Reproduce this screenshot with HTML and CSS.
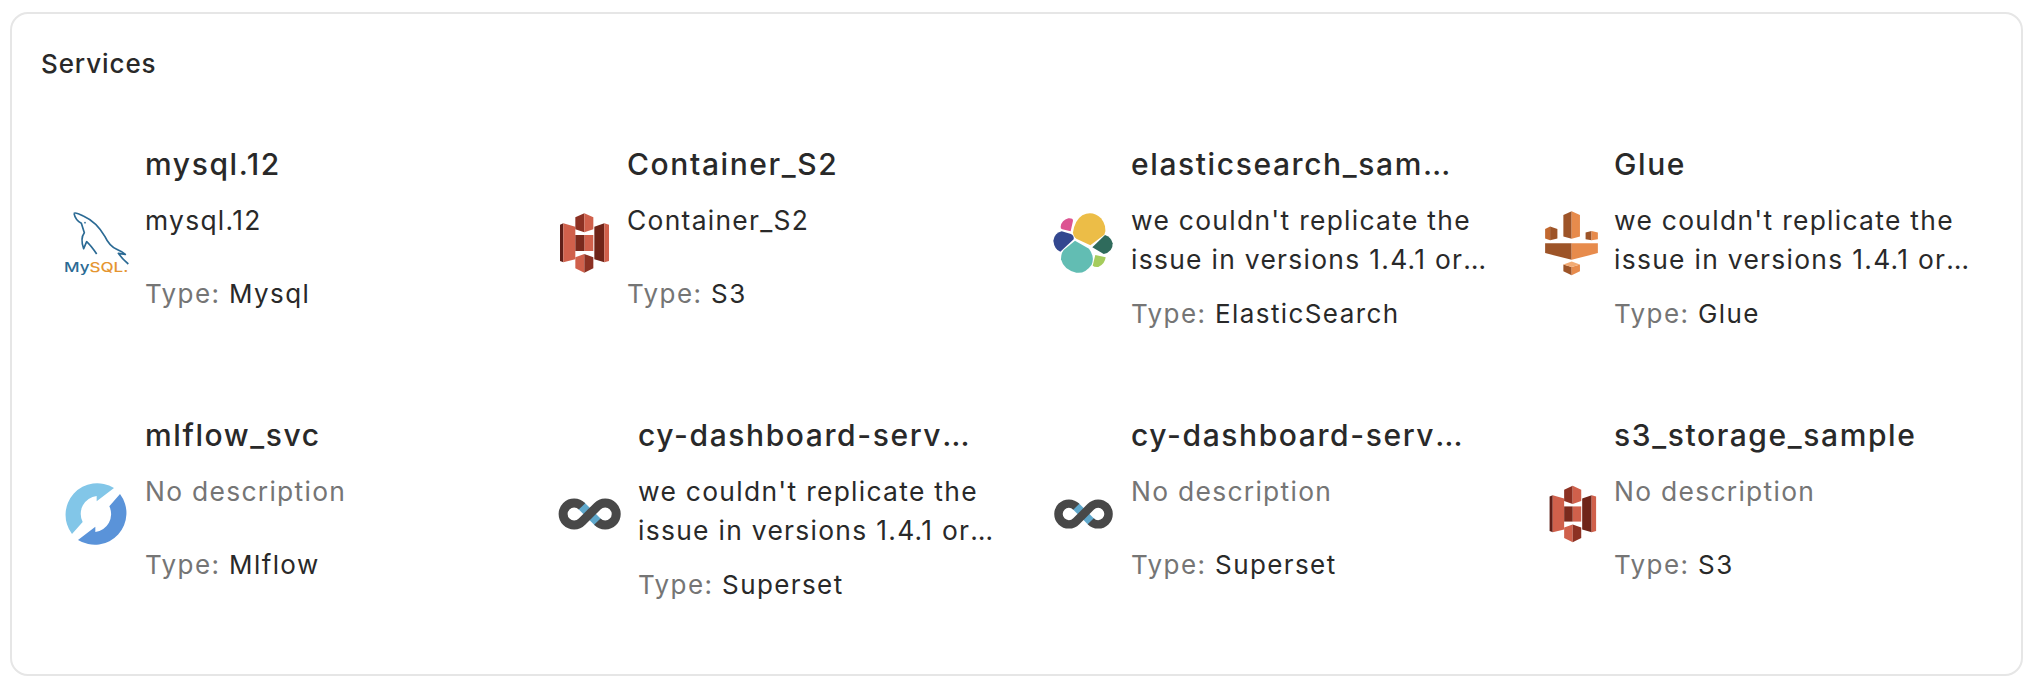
FILE: index.html
```html
<!DOCTYPE html>
<html lang="en">
<head>
    <meta charset="UTF-8">
    <meta name="viewport" content="width=device-width, initial-scale=1.0">
    <title>Services</title>
    <link rel="stylesheet" href="styles.css">
</head>
<body>
<svg class="defs" width="0" height="0">
    <defs>
        <symbol id="logo-s3" viewBox="36 30 177 198">
            <polygon fill="#5e1f18" points="60,74 70,70 70,187 60,183"/>
            <polygon fill="#d0604b" points="70,70 106,80 106,178 70,187"/>
            <polygon fill="#6f2418" points="163,80 193,70 193,187 163,178"/>
            <polygon fill="#d0604b" points="193,70 207,74 207,183 193,187"/>
            <polygon fill="#d0604b" points="133,105 160,105 160,153 133,153"/>
            <polygon fill="#7a2a1d" points="106,105 133,105 133,153 106,153"/>
            <polygon fill="#8c3123" points="106,52 133,40 133,97 106,88"/>
            <polygon fill="#d0604b" points="133,40 160,52 160,88 133,97"/>
            <polygon fill="#d0604b" points="106,172 133,162 133,218 106,205"/>
            <polygon fill="#8c3123" points="133,162 160,172 160,205 133,218"/>
        </symbol>
        <symbol id="logo-elastic" viewBox="36 30 204 198">
            <path fill="#ecbd47" d="M114 97Q120 60 142 46Q172 30 198 55Q218 80 208 104L166 136L124 116Q114 108 114 97Z"/>
            <path fill="#62bdb3" d="M120 122L162 146Q180 170 170 194Q150 222 124 218Q86 210 78 178Q78 160 86 150Z"/>
            <path fill="#33478f" d="M55 122Q58 100 80 94L108 102Q118 108 116 118L76 155Q58 148 55 122Z"/>
            <path fill="#dc5492" d="M77 80Q80 60 100 55Q114 54 114 62L107 94L82 88Q76 86 77 80Z"/>
            <path fill="#2f6b5c" d="M172 142L210 105Q228 110 233 130Q234 156 206 162Z"/>
            <path fill="#a5cc5c" d="M181 165L212 172Q210 192 190 201Q178 202 173 197Z"/>
        </symbol>
        <symbol id="logo-glue" viewBox="36 25 168 205">
            <polygon fill="#9d5428" points="100,43 125,32 125,115 100,108"/>
            <polygon fill="#e78b4c" points="125,32 150,43 150,108 125,115"/>
            <polygon fill="#c2682f" points="45,85 60,78 60,119 45,114"/>
            <polygon fill="#9d5428" points="60,78 82,85 82,114 60,119"/>
            <polygon fill="#9d5428" points="167,96 185,91 185,119 167,116"/>
            <polygon fill="#e78b4c" points="185,91 204,96 204,116 185,119"/>
            <polygon fill="#9d5428" points="45,128 125,128 125,178 45,158"/>
            <polygon fill="#e78b4c" points="125,128 204,128 204,158 125,178"/>
            <polygon fill="#9d5428" points="100,192 125,200 125,225 100,213"/>
            <polygon fill="#e78b4c" points="125,200 150,192 150,213 125,225"/>
            <polygon fill="#f2ab74" points="100,192 125,183 150,192 125,200"/>
        </symbol>
        <symbol id="logo-mlflow" viewBox="21 30 216 216">
            <path fill="#82c6e8" d="M66 198A95 95 0 0 1 192 60L140 100V84A54 54 0 0 0 98 162Z"/>
            <path fill="#5a93d9" d="M84 216A95 95 0 0 0 210 78L178 115A54 54 0 0 1 136 192V176Z"/>
        </symbol>
        <symbol id="logo-superset" viewBox="21 0 210 210">
            <path fill="none" stroke="#5fa8cc" stroke-width="27" d="M108 79L160 131"/>
            <path fill="none" stroke="#484848" stroke-width="27" d="M111 82A33 33 0 1 0 111 128L157 82A33 33 0 1 1 157 128"/>
        </symbol>
    </defs>
</svg>

<div class="card">
    <h2 class="card-title">Services</h2>
    <div class="services">
        <div class="service">
            <svg class="logo logo-72" viewBox="21 21 216 216">
                <path fill="none" stroke="#2b6a94" stroke-width="5" stroke-linejoin="round" d="M72 40Q76 36 100 48Q140 66 165 110Q178 138 200 148Q218 156 226 163L205 160Q216 176 235 192"/>
                <path fill="none" stroke="#2b6a94" stroke-width="5" stroke-linejoin="round" d="M72 40Q76 60 94 70L103 98Q90 115 101 146L110 125Q124 138 140 162"/>
                <circle cx="105" cy="68" r="2.5" fill="#2b6a94"/>
                <text class="logo-word" x="42" y="215" textLength="193" lengthAdjust="spacingAndGlyphs"><tspan fill="#2b6a94">My</tspan><tspan fill="#e59530">SQL.</tspan></text>
            </svg>
            <div class="service-text">
                <div class="service-name">mysql.12</div>
                <div class="service-desc">mysql.12</div>
                <div class="service-type">Type: <span>Mysql</span></div>
            </div>
        </div>
        <div class="service">
            <svg class="logo logo-s3-first"><use href="#logo-s3"/></svg>
            <div class="service-text">
                <div class="service-name">Container_S2</div>
                <div class="service-desc">Container_S2</div>
                <div class="service-type">Type: <span>S3</span></div>
            </div>
        </div>
        <div class="service">
            <svg class="logo logo-68"><use href="#logo-elastic"/></svg>
            <div class="service-text">
                <div class="service-name">elasticsearch_sample</div>
                <div class="service-desc">we couldn't replicate the issue in versions 1.4.1 or earlier and it only shows up on the newest build</div>
                <div class="service-type">Type: <span>ElasticSearch</span></div>
            </div>
        </div>
        <div class="service">
            <svg class="logo logo-56"><use href="#logo-glue"/></svg>
            <div class="service-text">
                <div class="service-name">Glue</div>
                <div class="service-desc">we couldn't replicate the issue in versions 1.4.1 or earlier and it only shows up on the newest build</div>
                <div class="service-type">Type: <span>Glue</span></div>
            </div>
        </div>
        <div class="service">
            <svg class="logo logo-72"><use href="#logo-mlflow"/></svg>
            <div class="service-text">
                <div class="service-name">mlflow_svc</div>
                <div class="service-desc empty">No description</div>
                <div class="service-type">Type: <span>Mlflow</span></div>
            </div>
        </div>
        <div class="service">
            <svg class="logo logo-70"><use href="#logo-superset"/></svg>
            <div class="service-text">
                <div class="service-name">cy-dashboard-service</div>
                <div class="service-desc">we couldn't replicate the issue in versions 1.4.1 or earlier and it only shows up on the newest build</div>
                <div class="service-type">Type: <span>Superset</span></div>
            </div>
        </div>
        <div class="service">
            <svg class="logo logo-68"><use href="#logo-superset"/></svg>
            <div class="service-text">
                <div class="service-name">cy-dashboard-service</div>
                <div class="service-desc empty">No description</div>
                <div class="service-type">Type: <span>Superset</span></div>
            </div>
        </div>
        <div class="service">
            <svg class="logo logo-56"><use href="#logo-s3"/></svg>
            <div class="service-text">
                <div class="service-name">s3_storage_sample</div>
                <div class="service-desc empty">No description</div>
                <div class="service-type">Type: <span>S3</span></div>
            </div>
        </div>
    </div>
</div>
</body>
</html>
```

FILE: styles.css
```css
html, body {
    height: 100%;
}
body {
    margin: 0;
    padding: 12px 9px 8px 10px;
    box-sizing: border-box;
    background-color: #fff;
    color: #292929;
    font-family: Inter, "Open Sans", sans-serif;
    overflow: hidden;
}
.defs {
    display: block;
}
.card {
    border: 2px solid #e6e6e6;
    border-radius: 18px;
    padding: 32px 0 0 29px;
    height: 664px;
    box-sizing: border-box;
}
.card-title {
    margin: 0;
    font-size: 26px;
    font-weight: 500;
    line-height: 36px;
    letter-spacing: 0.9px;
}
.services {
    display: grid;
    grid-template-columns: repeat(4, 479px);
    column-gap: 16px;
    row-gap: 71px;
    margin: 61px 0 0 16px;
}
.service {
    display: flex;
    gap: 16px;
    min-height: 200px;
}
.logo {
    flex: none;
    align-self: center;
}
.logo-s3-first { width: 59px; height: 66px; }
.logo-56 { width: 56px; height: 68px; }
.logo-68 { width: 68px; height: 66px; }
.logo-70 { width: 70px; height: 70px; }
.logo-72 { width: 72px; height: 72px; }
.logo-word {
    font-family: Inter, sans-serif;
    font-size: 40px;
    font-weight: 500;
}
.service-text {
    width: 346px;
    min-width: 0;
}
.service-name {
    width: 339px;
    font-size: 30px;
    font-weight: 500;
    line-height: 42px;
    letter-spacing: 1.6px;
    white-space: nowrap;
    overflow: hidden;
    text-overflow: ellipsis;
}
.service-desc {
    width: 362px;
    margin-top: 16px;
    min-height: 58px;
    font-size: 26.4px;
    line-height: 39px;
    letter-spacing: 1.3px;
    display: -webkit-box;
    -webkit-box-orient: vertical;
    -webkit-line-clamp: 2;
    overflow: hidden;
}
.service-desc.empty {
    color: #757575;
}
.service-type {
    margin-top: 15px;
    font-size: 26px;
    line-height: 39px;
    letter-spacing: 1.4px;
    color: #757575;
}
.service-type span {
    color: #292929;
}
```
